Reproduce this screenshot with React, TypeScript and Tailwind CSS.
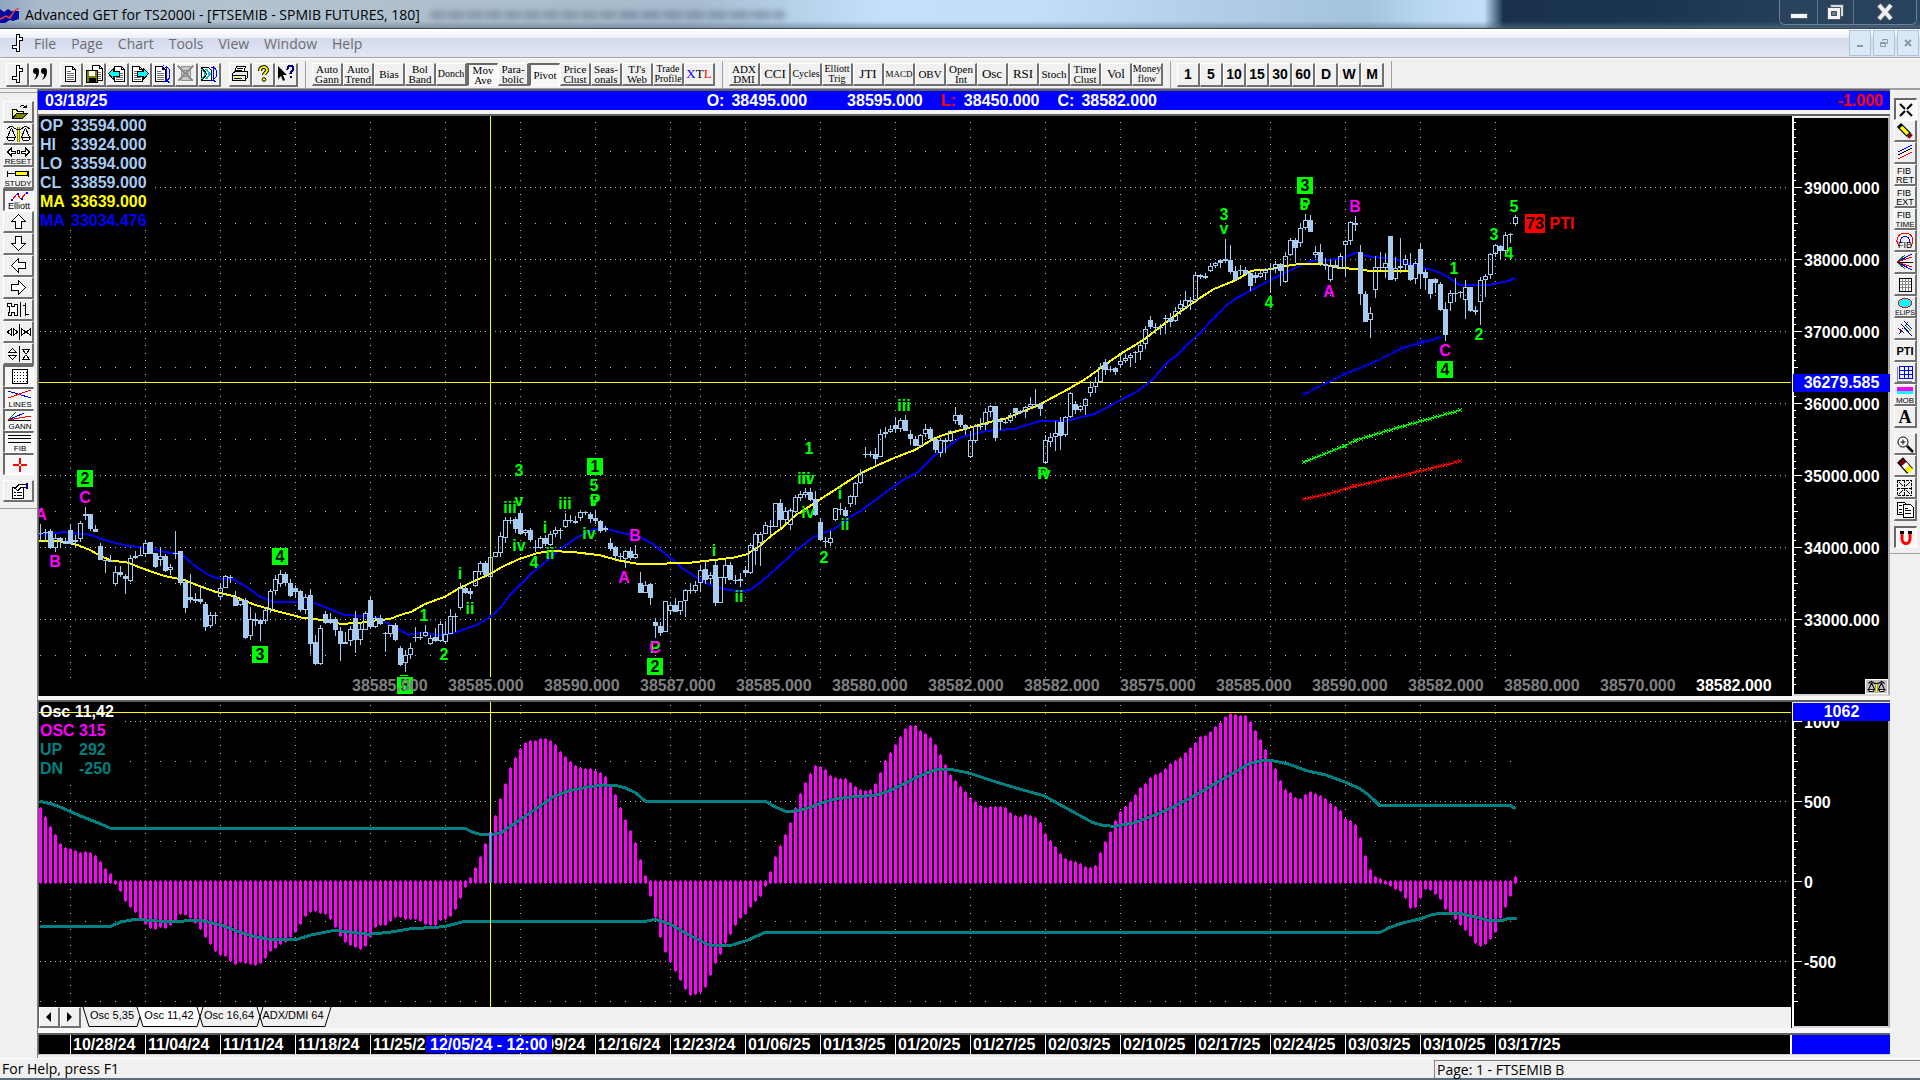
import React from "react";

type Pt = [number, number];

const BAR_STEP = 5;
const BAR_LEFT = 40;
const CANDLE = "#a6caf0";
const GREEN = "#00ff00";
const MAGENTA = "#ff00ff";
const TEAL = "#008080";

/* Expands flat x,y pairs measured in sub-pixel units into pane points. */
function trace(x0: number, div: number, y0: number, flat: number[]): Pt[] {
  const out: Pt[] = [];
  for (let i = 0; i < flat.length; i += 2) out.push([x0 + flat[i] / div, y0 + flat[i + 1] / 3]);
  return out;
}
const toPoints = (pts: Pt[]) => pts.map(([x, y]) => `${x.toFixed(1)},${y.toFixed(1)}`).join(" ");

const fastMa: Pt[] = [
  ...trace(0, 3, 440, [117, 302, 180, 304, 230, 314, 270, 330, 300, 347, 335, 362, 380, 367, 430, 386, 490, 407, 550, 419, 600, 439, 650, 457, 700, 468, 760, 493, 810, 508, 860, 521, 910, 534, 970, 540, 1020, 551, 1070, 550, 1120, 542, 1170, 537]),
  ...trace(400, 3, 440, [0, 525, 35, 515, 75, 492, 135, 470, 180, 443, 230, 420, 270, 402, 310, 379, 360, 356, 410, 340, 450, 333, 520, 336, 600, 346, 660, 362, 710, 371, 770, 373, 820, 369, 870, 368, 940, 360, 1000, 353, 1040, 343, 1080, 318, 1110, 290, 1150, 261, 1190, 222]),
  ...trace(800, 2.613, 200, [0, 938, 50, 900, 100, 863, 155, 822, 200, 797, 250, 772, 300, 750, 350, 716, 380, 703, 440, 684, 500, 665, 540, 655, 580, 635, 620, 617, 700, 568, 745, 538, 800, 492, 840, 460, 900, 418, 950, 373, 1000, 330, 1040, 298, 1080, 268, 1140, 240, 1180, 212, 1230, 208, 1270, 198, 1310, 191, 1360, 192, 1410, 204, 1460, 207, 1490, 213, 1590, 213]),
];

const slowMa: Pt[] = [
  ...trace(0, 3, 440, [117, 284, 190, 277, 225, 280, 270, 284, 310, 299, 380, 317, 430, 322, 500, 337, 545, 342, 580, 374, 620, 402, 650, 415, 700, 418, 740, 441, 780, 470, 820, 485, 940, 488, 980, 503, 1030, 524, 1080, 528, 1125, 530, 1160, 548]),
  ...trace(400, 3, 440, [0, 570, 25, 584, 70, 578, 110, 585, 160, 580, 200, 565, 230, 555, 270, 532, 300, 505, 330, 465, 360, 436, 400, 396, 440, 363, 480, 328, 530, 293, 580, 268, 610, 263, 650, 275, 720, 291, 760, 313, 800, 345, 850, 386, 890, 413, 930, 435, 975, 448, 1020, 454, 1050, 450, 1080, 428, 1130, 385, 1180, 338, 1240, 292, 1270, 280, 1300, 268, 1340, 240]),
  ...trace(800, 2.613, 200, [125, 955, 160, 932, 220, 880, 270, 840, 310, 815, 350, 768, 380, 745, 420, 712, 490, 692, 560, 687, 630, 662, 690, 663, 720, 656, 770, 642, 830, 605, 880, 575, 920, 540, 960, 487, 980, 470, 1050, 393, 1110, 320, 1140, 295, 1180, 270, 1230, 240]),
  ...trace(1280, 2.45, 0, [0, 826, 40, 802, 80, 782, 150, 777, 185, 758, 215, 769, 285, 778, 330, 798, 380, 812, 410, 830, 440, 854, 515, 854, 560, 843, 577, 833]),
];

const upperBand: Pt[] = [
  ...trace(36, 2.01, 700, [7, 304, 30, 311, 50, 322, 80, 342, 130, 372, 150, 385, 862, 385, 875, 395, 895, 404, 913, 405, 935, 398, 960, 372, 1000, 332, 1040, 290, 1070, 273, 1110, 261, 1140, 255, 1165, 256, 1185, 264, 1205, 278, 1225, 304, 1466, 304, 1485, 320, 1505, 333]),
  ...trace(790, 2.613, 700, [0, 334, 20, 332, 50, 323, 80, 310, 110, 299, 150, 292, 200, 288, 230, 284, 270, 268, 320, 238, 350, 222, 380, 210, 420, 208, 470, 220, 530, 243, 600, 267, 665, 288, 720, 323, 790, 367, 820, 377, 850, 379, 900, 368, 960, 342, 1000, 322, 1060, 285, 1130, 238, 1200, 191, 1230, 183, 1255, 181, 1300, 191, 1350, 212, 1400, 225, 1450, 246, 1490, 266, 1515, 288, 1540, 316]),
  ...trace(1280, 2.45, 640, [565, 496, 577, 507]),
];

const lowerBand: Pt[] = [
  ...trace(36, 2.01, 700, [7, 679, 150, 679, 170, 666, 200, 658, 265, 665, 330, 661, 370, 674, 410, 697, 440, 710, 470, 718, 525, 718, 550, 706, 600, 691, 670, 703, 710, 697, 750, 687, 820, 680, 862, 664, 1225, 664, 1245, 658, 1275, 673, 1310, 703, 1350, 733, 1365, 738, 1395, 737, 1430, 721, 1466, 697]),
  ...trace(1280, 2.45, 640, [246, 877, 270, 862, 300, 849, 340, 838, 370, 825, 390, 820, 440, 820, 480, 832, 515, 842, 545, 841, 560, 835, 580, 835]),
];

const channels: { color: string; pts: Pt[] }[] = [
  { color: "#0000ff", pts: [[1304, 394], [1345, 374], [1374, 362], [1402, 348], [1423, 342], [1443, 337]] },
  { color: "#00ff00", pts: [[1304, 462], [1345, 446], [1356, 440], [1400, 427], [1461, 410]] },
  { color: "#ff0000", pts: [[1304, 499], [1324, 495], [1355, 486], [1400, 476], [1461, 461]] },
];

function crosses(pts: Pt[]): string {
  let d = "";
  for (let i = 0; i < pts.length - 1; i++) {
    const [x1, y1] = pts[i];
    const [x2, y2] = pts[i + 1];
    for (let x = x1; x < x2; x += 5) {
      const y = Math.round(y1 + ((y2 - y1) * (x - x1)) / (x2 - x1));
      d += `M${x - 2} ${y - 2}l4 4M${x - 2} ${y + 2}l4 -4`;
    }
  }
  return d;
}

/* Each candle: high, body top, body bottom, low, kind (0 rising, 1 falling, 2 flat). */
const candleRuns: { y0: number; rows: string }[] = [
  {
    y0: 440,
    rows:
      "252 280 281 305 2|268 277 278 305 2|267 272 323 326 1|283 295 323 335 0|291 294 304 323 1|294 304 311 313 1|252 269 311 313 1|286 299 306 322 0|243 249 296 305 0|201 223 229 240 0|222 222 266 274 1|255 267 277 277 1|309 317 359 359 1|359 359 360 399 2|345 359 365 365 1|378 397 431 437 0|378 396 406 410 1|402 408 417 461 1|345 354 422 426 0|333 347 355 358 0|320 344 345 346 2|303 310 343 352 0|306 306 342 342 1|339 339 380 384 1|322 349 361 378 0|342 348 392 395 1|372 381 391 404 0|273 338 339 357 2|333 333 428 435 1|420 426 504 518 1|402 471 481 490 1|459 477 483 488 1|435 476 487 492 1|486 491 560 573 1|515 526 559 565 0|515 526 527 552 2|430 444 472 479 0|405 408 445 445 0|405 412 413 430 2|453 472 497 497 1|474 481 496 497 0|474 479 593 597 1|500 538 587 600 0|520 536 543 558 1|536 541 552 603 1|500 511 542 553 0|448 454 509 519 0|405 418 452 465 0|391 402 433 440 0|397 402 430 437 1|417 429 467 470 1|436 444 455 475 1|450 453 510 516 1|462 471 510 521 0|447 465 611 641 1|585 606 671 674 1|556 564 671 674 0|513 522 548 551 1|520 538 548 551 1|532 538 570 587 1|561 573 612 663 1|576 605 611 613 0|558 568 604 617 0|513 534 599 639 1|545 567 599 614 0|513 519 569 570 0|468 480 560 567 1|528 535 560 565 0|524 534 553 555 1|576 580 581 636 2|555 555 583 590 0|549 555 600 602 1|618 624 674 678 1|630 646 670 696 0|610 625 646 658 0|561 590 591 605 2|575 590 591 600 2|555 577 587 590 0|586 595 611 614 0|564 592 602 607 1|543 552 602 605 0|543 581 607 613 0|507 528 581 583 0|519 527 528 575 2|430 445 503 509 0|436 445 458 462 1|445 454 462 477 1|392 394 437 440 0|362 370 396 405 0|363 369 405 408 1|352 352 410 410 0|337 337 352 352 0|276 289 338 350 0|231 240 294 308 0|231 240 241 252 2|230 238 267 280 1|210 218 281 285 1|268 271 280 288 0|264 270 299 306 1|300 321 322 336 2|288 294 323 327 0|284 293 312 318 1|272 283 314 318 0|262 269 283 292 0|265 270 271 297 2|219 241 260 265 0|224 241 242 249 2|228 242 250 252 1|210 217 233 242 0|213 217 218 225 2|215 221 236 249 1|210 235 244 252 1|240 243 273 279 1|257 264 271 277 0|294 310 327 333 1|318 321 348 360 1|340 347 348 360 2|330 334 356 384 0|320 332 354 359 1|315 341 353 357 0|396 430 458 459 1|422 434 458 460 0|429 432 473 494 1|534 546 557 594 1|545 558 578 588 1|484 484 576 576 0|486 496 512 525 0|474 495 515 517 1|484 484 514 524 0|448 451 484 530 0|430 451 452 461 2|423 434 452 459 0|375 390 428 455 0|361 388 419 432 1|397 405 418 433 0|364 375 489 497 1|412 412 488 490 0|360 376 414 432 0|367 375 419 420 1|405 419 420 432 2|400 416 421 440 0|377 390 399 411 1|308 316 400 403 0|275 283 334 376 0|275 281 308 378 0|245 256 281 283 0|240 258 259 285 2|190 190 261 261 0|177 190 240 265 1|200 214 240 250 0|205 210 255 270 0|166 171 215 220 0|153 161 174 183 0|145 156 164 175 0|145 156 180 184 1|153 178 225 228 1|235 246 299 302 1|290 303 304 322 2|272 295 308 318 0|203 205 240 243 0|190 207 208 225 2|200 210 228 232 1|165 168 193 201 0|125 129 170 195 0|88 100 129 133 0",
  },
  {
    y0: 200,
    rows:
      "741 762 763 775 2|753 763 764 772 2|745 763 777 795 1|687 702 770 772 0|681 697 703 715 0|675 687 695 700 0|651 675 686 695 1|655 661 688 697 0|645 660 692 694 1|690 702 718 735 1|708 717 737 738 1|702 706 737 740 0|672 686 702 712 0|680 686 718 722 1|716 716 749 759 1|715 721 758 771 0|715 720 725 760 0|690 693 722 726 0|621 646 664 672 0|642 645 674 682 1|672 675 686 705 1|693 720 770 774 0|673 679 724 730 0|655 678 679 690 2|625 637 676 690 0|615 618 637 650 0|618 618 714 723 1|654 660 665 690 0|655 665 666 672 2|638 646 664 669 0|624 624 640 655 1|630 634 640 643 1|618 622 635 654 0|591 613 620 627 0|567 613 614 625 2|609 612 627 648 1|705 721 790 792 0|700 712 725 740 0|663 699 710 753 0|651 666 707 750 1|648 650 706 710 0|575 580 652 654 0|603 612 631 641 1|615 619 631 635 0|595 598 619 645 0|543 562 580 592 0|530 545 562 580 0|490 502 545 545 0|478 487 510 525 1|498 508 509 515 2|500 504 515 524 1|462 484 494 503 0|462 475 484 490 0|458 466 475 500 0|454 457 458 488 2|428 436 457 480 0|378 388 433 446 0|348 360 381 388 1|370 381 382 402 2|373 382 383 405 2|345 353 354 402 2|340 354 367 380 1|321 334 364 367 0|300 313 328 345 0|273 301 320 325 0|292 301 307 330 1|216 226 300 302 0|222 226 232 238 1|220 229 234 237 0|190 198 214 216 0|185 189 199 205 0|178 181 188 204 1|117 177 184 188 0|135 180 215 222 1|198 213 240 240 1|195 210 211 225 2|200 210 221 225 1|216 220 258 274 1|215 225 233 250 1|210 220 231 235 0|205 209 220 240 0|190 207 208 278 2|184 193 207 218 0|190 192 212 258 1|156 168 245 248 0|115 121 166 168 0|115 121 143 190 1|69 85 130 140 0|42 61 85 90 0|45 60 95 96 1|138 157 164 175 0|132 156 190 197 1|175 192 198 210 1|178 198 241 245 0|180 196 202 205 1|160 169 203 206 0|120 124 136 230 0|62 67 124 136 0|48 70 76 93 1|135 156 282 315 1|273 282 366 366 1|321 340 361 414 0|168 202 271 294 0|156 202 203 210 2|160 190 205 235 0",
  },
  {
    y0: 0,
    rows:
      "708 708 840 840 1|772 805 838 842 0|714 799 805 820 0|765 778 795 810 0|760 794 840 842 1|783 790 838 852 0|729 746 822 867 1|808 817 835 870 1|837 837 882 897 1|835 838 850 880 1|846 852 930 933 1|906 927 1005 1022 1|870 880 910 933 0|834 880 881 905 2|873 877 878 895 2|840 861 900 957 0|861 861 933 935 1|918 930 936 945 1|831 841 907 975 0|823 827 841 890 0|760 763 824 838 0|732 736 763 770 0|735 738 752 780 1|696 706 752 765 0|699 703 704 730 2|645 651 672 678 0",
  },
];

const candles = candleRuns.flatMap((run) =>
  run.rows.split("|").map((row) => {
    const [hi, top, bot, lo, kind] = row.split(" ").map(Number);
    const px = (v: number) => Math.round(run.y0 + v / 3);
    return { hi: px(hi), top: px(top), bot: px(bot), lo: px(lo), kind };
  }),
);

function candlePaths() {
  let solid = "";
  let wire = "";
  candles.forEach((c, i) => {
    const x = BAR_LEFT + i * BAR_STEP;
    if (c.kind === 2) {
      wire += `M${x - 2} ${c.top + 0.5}h5M${x + 0.5} ${c.hi}V${c.lo}`;
      return;
    }
    wire += `M${x + 0.5} ${c.hi}V${c.top}M${x + 0.5} ${c.bot}V${c.lo}`;
    if (c.kind === 1) solid += `M${x - 2} ${c.top}h5V${c.bot}h-5z`;
    else wire += `M${x - 1.5} ${c.top + 0.5}h4V${Math.max(c.bot - 0.5, c.top + 1.5)}h-4z`;
  });
  return { solid, wire };
}

const oscTops = [
  325, 352, 382, 406, 433, 445, 448, 454, 460, 457, 460, 469, 487, 508, 523, 552, 574, 604, 622, 637, 658, 673, 685, 688, 682, 685, 676, 661, 643, 646, 655, 670, 688, 712, 733, 754, 766, 769, 784, 793, 787, 790, 793, 796, 790, 775, 754, 745, 733, 727, 712, 697, 673, 649, 637, 634, 640, 643, 658, 682, 709, 727, 736, 742, 748, 739, 712, 682, 676, 676, 664, 652, 652, 658, 658, 658, 664, 673, 676, 676, 661, 658, 649, 628, 595, 562, 535, 505, 472, 433, 395, 349, 298, 253, 205, 175, 148, 130, 124, 124, 118, 118, 124, 136, 157, 172, 187, 199, 205, 208, 208, 214, 220, 232, 254, 286, 325, 361, 394, 430, 481, 529, 589, 652, 712, 757, 787, 814, 841, 868, 886, 883, 877, 862, 826, 790, 763, 730, 703, 676, 655, 643, 622, 604, 589, 559, 517, 472, 439, 406, 370, 325, 283, 250, 223, 199, 202, 211, 229, 235, 238, 238, 250, 262, 271, 274, 271, 253, 220, 184, 160, 136, 112, 88, 79, 79, 94, 103, 115, 136, 166, 196, 226, 244, 262, 277, 295, 307, 319, 325, 322, 322, 322, 325, 340, 349, 352, 346, 349, 355, 370, 403, 424, 442, 463, 478, 484, 487, 493, 502, 505, 499, 460, 427, 397, 364, 337, 322, 307, 286, 265, 253, 235, 226, 220, 208, 193, 184, 175, 160, 145, 130, 112, 109, 97, 82, 70, 52, 43, 46, 49, 49, 67, 94, 121, 151, 184, 208, 244, 271, 280, 295, 298, 286, 277, 283, 289, 298, 313, 322, 334, 358, 364, 376, 415, 469, 511, 532, 538, 552, 558, 567, 573, 593, 623, 620, 593, 567, 570, 582, 596, 626, 640, 656, 674, 689, 707, 728, 737, 731, 716, 695, 653, 620, 588, 532,
];

const weekLines = [...Array.from({ length: 20 }, (_, i) => 70 + 75 * i), 700];

function dotGrid(rows: { y: number; step: number; end: number }[], colYs: number[]) {
  let d = "";
  for (const r of rows) for (let x = 40; x < r.end; x += r.step) d += `M${x} ${r.y + 0.5}h1`;
  for (const x of weekLines) for (const y of colYs) d += `M${x} ${y + 0.5}h1`;
  return d;
}

const priceRows = Array.from({ length: 15 }, (_, i) => {
  const major = i % 2 === 1;
  return { y: 151 + 36 * i, step: major ? 5 : 15, end: major ? 1790 : 1516 };
});
const priceColYs = Array.from({ length: 78 }, (_, i) => Math.floor(122.7 + 7.2 * i));
const oscRows = [721, 761, 801, 841, 881, 921, 961, 1001].map((y, i) => ({
  y,
  step: i % 2 === 0 ? 5 : 15,
  end: i % 2 === 0 ? 1790 : 1516,
}));
const oscColYs = Array.from({ length: 37 }, (_, i) => 705 + 8 * i);

type Mark = { x: number; y: number; t: string; c?: string };
const waveMarks: Mark[] = [
  { x: 41, y: 520, t: "A", c: MAGENTA },
  { x: 55, y: 567, t: "B", c: MAGENTA },
  { x: 85, y: 503, t: "C", c: MAGENTA },
  { x: 424, y: 621, t: "1" },
  { x: 460, y: 579, t: "i" },
  { x: 470, y: 614, t: "ii" },
  { x: 444, y: 660, t: "2" },
  { x: 519, y: 476, t: "3" },
  { x: 519, y: 506, t: "v" },
  { x: 510, y: 513, t: "iii" },
  { x: 519, y: 551, t: "iv" },
  { x: 534, y: 568, t: "4" },
  { x: 545, y: 533, t: "i" },
  { x: 550, y: 559, t: "ii" },
  { x: 565, y: 509, t: "iii" },
  { x: 594, y: 491, t: "5" },
  { x: 595, y: 506, t: "P" },
  { x: 594, y: 506, t: "v" },
  { x: 589, y: 539, t: "iv" },
  { x: 635, y: 541, t: "B", c: MAGENTA },
  { x: 624, y: 583, t: "A", c: MAGENTA },
  { x: 655, y: 653, t: "P" },
  { x: 655, y: 653, t: "C", c: MAGENTA },
  { x: 714, y: 556, t: "i" },
  { x: 739, y: 602, t: "ii" },
  { x: 809, y: 454, t: "1" },
  { x: 804, y: 484, t: "iii" },
  { x: 808, y: 484, t: "iv" },
  { x: 808, y: 518, t: "iv" },
  { x: 840, y: 499, t: "i" },
  { x: 845, y: 530, t: "ii" },
  { x: 824, y: 563, t: "2" },
  { x: 904, y: 411, t: "iii" },
  { x: 1043, y: 479, t: "P" },
  { x: 1044, y: 479, t: "iv" },
  { x: 1224, y: 220, t: "3" },
  { x: 1224, y: 234, t: "v" },
  { x: 1269, y: 308, t: "4" },
  { x: 1329, y: 297, t: "A", c: MAGENTA },
  { x: 1355, y: 212, t: "B", c: MAGENTA },
  { x: 1305, y: 210, t: "P" },
  { x: 1304, y: 210, t: "5" },
  { x: 1514, y: 212, t: "5" },
  { x: 1494, y: 240, t: "3" },
  { x: 1509, y: 259, t: "4" },
  { x: 1454, y: 274, t: "1" },
  { x: 1479, y: 340, t: "2" },
  { x: 1445, y: 356, t: "C", c: MAGENTA },
];
const boxedMarks: Mark[] = [
  { x: 85, y: 470, t: "2" },
  { x: 280, y: 548, t: "4" },
  { x: 260, y: 646, t: "3" },
  { x: 595, y: 458, t: "1" },
  { x: 655, y: 658, t: "2" },
  { x: 1305, y: 177, t: "3" },
  { x: 1445, y: 361, t: "4" },
  { x: 405, y: 677, t: "5" },
];

function PricePane() {
  const { solid, wire } = candlePaths();
  return (
    <svg className="absolute inset-0 h-full w-full" aria-label="Price chart" role="img">
      <g transform="translate(-39 -116)">
        <g shapeRendering="crispEdges" fill="none">
          <path d={dotGrid(priceRows, priceColYs)} stroke="#c0c0c0" />
          <rect x="39" y="116" width="114" height="112" fill="#000" />
          <line x1="490.5" y1="116" x2="490.5" y2="677" stroke="#ff0" />
          <line x1="39" y1="382.5" x2="1791" y2="382.5" stroke="#ff0" />
          <polyline points={toPoints(slowMa)} stroke="#0000ff" strokeWidth="2" />
          <polyline points={toPoints(fastMa)} stroke="#ffff00" strokeWidth="2" />
          {channels.map((c) => (
            <g key={c.color} stroke={c.color}>
              <polyline points={toPoints(c.pts)} />
              <path d={crosses(c.pts)} />
            </g>
          ))}
          <path d={solid} fill={CANDLE} />
          <path d={wire} stroke={CANDLE} />
          <path d="M400 675.5h8" stroke={GREEN} />
        </g>
        <g fontFamily="Liberation Sans, Arial, sans-serif" fontWeight="700" fontSize="16" textAnchor="middle">
          {waveMarks.map((m, i) => (
            <text key={i} x={m.x} y={m.y} fill={m.c ?? GREEN}>
              {m.t}
            </text>
          ))}
          {boxedMarks.map((m, i) => (
            <g key={i}>
              <rect x={m.x - 8} y={m.y} width="16" height="17" fill={GREEN} />
              <text x={m.x} y={m.y + 14} fill="#000">
                {m.t}
              </text>
            </g>
          ))}
          <rect x="1525" y="214" width="20" height="19" fill="#f00" />
          <text x="1535" y="229" fill="#000">73</text>
          <text x="1562" y="229" fill="#f00">PTI</text>
        </g>
      </g>
    </svg>
  );
}

function OscPane() {
  let wide = "";
  let tip = "";
  oscTops.forEach((v, i) => {
    const x = BAR_LEFT + i * BAR_STEP;
    if (i === 90) return;
    const y = Math.round(700 + v / 3);
    if (v < 547) {
      wide += `M${x - 1} ${y}h3V883h-3z`;
      tip += `M${x} ${y - 1}h1V884h-1z`;
    } else {
      wide += `M${x - 1} 881h3V${y}h-3z`;
      tip += `M${x} 880h1V${y + 1}h-1z`;
    }
  });
  return (
    <svg className="absolute inset-0 h-full w-full" aria-label="Oscillator chart" role="img">
      <g transform="translate(-39 -702)" shapeRendering="crispEdges" fill="none">
        <path d={dotGrid(oscRows, oscColYs)} stroke="#c0c0c0" />
        <rect x="39" y="702" width="84" height="79" fill="#000" />
        <path d={wide + tip} fill={MAGENTA} />
        <polyline points={toPoints(upperBand)} stroke={TEAL} strokeWidth="3" />
        <polyline points={toPoints(lowerBand)} stroke={TEAL} strokeWidth="3" />
        <line x1="490.5" y1="702" x2="490.5" y2="1007" stroke="#ff0" />
        <path d="M489 832h3v51h-3z" fill="#c040c0" />
        <path d="M490 832h1v51h-1z" fill="#00e0ff" />
        <line x1="39" y1="712.5" x2="1791" y2="712.5" stroke="#ff0" />
      </g>
    </svg>
  );
}

function Axis({ top, ticks, labels, tag, tagY }: { top: number; ticks: [number, number][]; labels: [string, number][]; tag: string; tagY: number }) {
  return (
    <div className="relative w-[98px] shrink-0 self-stretch border-y-2 border-r-2 border-l-2 border-t-[#f0f0f0] border-r-[#a8a8a8] border-b-[#d8d8d8] border-l-white bg-black">
      <svg className="absolute inset-0 h-full w-full" aria-hidden="true">
        <g transform={`translate(-1794 ${-top - 2})`} shapeRendering="crispEdges">
          <path d={ticks.map(([y, w]) => `M1794 ${y + 0.5}h${w}`).join("")} stroke="#fff" />
        </g>
        <g transform={`translate(-1794 ${-top - 2})`} fontFamily="Liberation Sans, Arial, sans-serif" fontWeight="700" fontSize="16" fill="#fff">
          {labels.map(([t, y]) => (
            <text key={t} x="1804" y={y + 6}>
              {t}
            </text>
          ))}
        </g>
      </svg>
      <div
        className="absolute -right-0.5 -left-px flex h-[18px] items-center justify-center bg-[#0000ff] text-[16px] leading-[18px] font-bold text-white"
        style={{ top: tagY - top - 2 }}
      >
        {tag}
      </div>
    </div>
  );
}

const priceTicks: [number, number][] = Array.from({ length: 79 }, (_, i) => [
  Math.floor(122.7 + 7.2 * i),
  i % 10 === 9 ? 8 : i % 10 === 4 ? 4 : 2,
]);
const priceLabels: [string, number][] = [39, 38, 37, 36, 35, 34, 33].map((n, i) => [`${n}000.000`, 188 + 72 * i]);
const oscTicks: [number, number][] = Array.from({ length: 36 }, (_, i) => [721 + 8 * i, i % 10 === 0 ? 8 : i % 5 === 0 ? 4 : 2]);
const oscLabels: [string, number][] = [["1000", 722], ["500", 802], ["0", 882], ["-500", 962]];

/* ---------- buttons ---------- */

function Btn({ label, pressed, className, children }: { label: string; pressed?: boolean; className: string; children: React.ReactNode }) {
  return (
    <button
      type="button"
      aria-label={label}
      aria-pressed={pressed || undefined}
      className={
        (pressed
          ? "border-t-2 border-l-2 border-r border-b border-t-[#696969] border-l-[#696969] border-r-white border-b-white bg-[#f8f8f8] "
          : "border-t border-l border-r-2 border-b-2 border-t-white border-l-white border-r-[#707070] border-b-[#707070] bg-[#f0f0f0] ") +
        "flex shrink-0 items-center justify-center overflow-hidden text-black " +
        className
      }
    >
      {children}
    </button>
  );
}

function Ico({ w = 20, h = 20, children }: { w?: number; h?: number; children: React.ReactNode }) {
  return (
    <svg width={w} height={h} viewBox={`0 0 ${w} ${h}`} fill="none" stroke="#000" shapeRendering="crispEdges" className="shrink-0" aria-hidden="true">
      {children}
    </svg>
  );
}

const Sheet = ({ x = 4, y = 2 }: { x?: number; y?: number }) => (
  <g transform={`translate(${x} ${y})`}>
    <path d="M.5 .5h7l3 3v12h-10z" fill="#fff" />
    <path d="M7.5 .5v3h3" />
    <path d="M2 5.5h4M2 7.5h7M2 9.5h7M2 11.5h7M2 13.5h7" stroke="#707070" />
  </g>
);

const topIcons: Record<string, React.ReactNode> = {
  bar: (
    <Ico>
      <path d="M9.5 1.5h3v3h3v3h-3v11h-3v-3h-4v-3h4z" fill="#fff" />
    </Ico>
  ),
  quote: (
    <Ico>
      <g fill="#000" stroke="none" shapeRendering="auto">
        <path d="M3 7a3 3 0 1 1 6 0c0 4-1 7-5 9 2-3 2-4 2-6-2 0-3-1-3-3zM11 7a3 3 0 1 1 6 0c0 4-1 7-5 9 2-3 2-4 2-6-2 0-3-1-3-3z" />
      </g>
    </Ico>
  ),
  page: <Ico><Sheet /></Ico>,
  save: (
    <Ico>
      <Sheet x={8} y={1} />
      <path d="M2.500 6.500h11v12h-11z" fill="#808000" />
      <path d="M5 7h6v5h-6z" fill="#fff" stroke="none" />
      <path d="M5 14h6v4h-6z" fill="#000" />
    </Ico>
  ),
  left: (
    <Ico>
      <Sheet x={7} y={2} />
      <path d="M1.500 9.500l5-5v3h6v5h-6v3z" fill="#0ff" />
    </Ico>
  ),
  right: (
    <Ico>
      <Sheet x={2} y={2} />
      <path d="M18.500 9.500l-5-5v3h-6v5h6v3z" fill="#0ff" />
    </Ico>
  ),
  rotate: (
    <Ico>
      <Sheet x={2} y={2} />
      <path d="M13.500 2v15M11.500 3h3l2 3v8l-3 3h-3M16.500 14l-2 3 2 2M11 1l-2 2 2 2" stroke="#00f" />
    </Ico>
  ),
  remove: (
    <Ico>
      <g stroke="#909090">
        <path d="M5.500 2.500h9v14h-9zM7 6.500h6M7 9.500h6M7 12.500h6" fill="#ccc" />
        <path d="M2 2l15 15M17 2L2 17" strokeWidth="2" />
      </g>
    </Ico>
  ),
  cycle: (
    <Ico>
      <path d="M2.500 3.500h7l3 3v10h-10z" fill="#fff" />
      <path d="M3 5l4 5-4 5M7 5l4 5-4 5" stroke="#00c8c8" strokeWidth="2" />
      <path d="M3 4l5 6-5 6" />
      <path d="M14.500 2v13M12 3h3l2 3v7l-3 3h-3M17 13l-3 3 3 2" stroke="#00f" />
    </Ico>
  ),
  print: (
    <Ico>
      <path d="M6.500 2.500h9l-2 6h-9z" fill="#fff" />
      <path d="M7 4.500h6M6 6.500h6M2.500 9.500l3-2h12v6l-3 3h-12z" fill="#e8e8e8" />
      <path d="M3 11.500h12v5M4 14.500h8" />
      <path d="M6 13h5" stroke="#ff0" />
    </Ico>
  ),
  help: (
    <Ico>
      <g shapeRendering="auto">
        <path d="M7 7c0-5 7-5 7-1 0 3-3 3-3 5" stroke="#000" strokeWidth="4" />
        <path d="M7 7c0-5 7-5 7-1 0 3-3 3-3 5" stroke="#ff0" strokeWidth="2" />
        <circle cx="11" cy="15.500" r="1.800" fill="#ff0" />
      </g>
    </Ico>
  ),
  what: (
    <Ico>
      <path d="M2 2v13l3-3 2 5 2-1-2-5h4z" fill="#000" stroke="none" shapeRendering="auto" />
      <path d="M11.500 5.500c0-5 6-4 6-1 0 3-3 3-3 5" stroke="#000080" strokeWidth="2" />
      <path d="M13.500 11.500h2v2h-2z" fill="#000080" stroke="none" />
    </Ico>
  ),
};

const iconGroups: [string, string][][] = [
  [["bar", "Bar chart"], ["quote", "Quotes"]],
  [["page", "New page"], ["save", "Save page"], ["left", "Previous page"], ["right", "Next page"], ["rotate", "Rotate page"], ["remove", "Delete page"], ["cycle", "Cycle pages"]],
  [["print", "Print"], ["help", "Help"], ["what", "Context help"]],
];

type Study = { a: string; b?: string; s?: "xs" | "sm" | "md" | "lg"; p?: boolean };
const studiesOne: Study[] = [
  { a: "Auto", b: "Gann" }, { a: "Auto", b: "Trend" }, { a: "Bias", s: "md" }, { a: "Bol", b: "Band" }, { a: "Donch", s: "sm" },
  { a: "Mov", b: "Ave", p: true }, { a: "Para-", b: "bolic" }, { a: "Pivot", s: "md", p: true }, { a: "Price", b: "Clust" }, { a: "Seas-", b: "onals" },
  { a: "TJ's", b: "Web" }, { a: "Trade", b: "Profile", s: "sm" }, { a: "XTL", s: "lg" },
];
const studiesTwo: Study[] = [
  { a: "ADX", b: "DMI" }, { a: "CCI", s: "lg" }, { a: "Cycles", s: "sm" }, { a: "Elliott", b: "Trig", s: "sm" }, { a: "JTI", s: "lg" }, { a: "MACD", s: "xs" },
  { a: "OBV", s: "md" }, { a: "Open", b: "Int" }, { a: "Osc", s: "lg" }, { a: "RSI", s: "lg" }, { a: "Stoch", s: "md" }, { a: "Time", b: "Clust" },
  { a: "Vol", s: "lg" }, { a: "Money", b: "flow", s: "sm" },
];
const studySize = { xs: "text-[9px]", sm: "text-[10px]", md: "text-[11px]", lg: "text-[13px]" };

function StudyButton({ a, b, s = "md", p }: Study) {
  return (
    <Btn label={b ? `${a} ${b}` : a} pressed={p} className="h-[23px] w-[31px]">
      <span className={"block text-center font-['Liberation_Serif',serif] leading-[10px] font-medium whitespace-nowrap " + studySize[s]}>
        {a === "XTL" ? (
          <>
            <span className="text-[#0000ff]">X</span>T<span className="text-[#ff0000]">L</span>
          </>
        ) : (
          a
        )}
        {b && (
          <>
            <br />
            {b}
          </>
        )}
      </span>
    </Btn>
  );
}

const Sep = () => <span className="mr-[6px] ml-[7px] h-[28px] w-px shrink-0 self-center bg-[#a0a0a0]" />;

/* ---------- side bar icons ---------- */

const T = ({ x, y, s = 8, w = 400, children }: { x: number; y: number; s?: number; w?: number; children: string }) => (
  <text x={x} y={y} fontSize={s} textAnchor="middle" fill="#000" stroke="none" fontFamily="Liberation Sans, Arial, sans-serif" fontWeight={w}>
    {children}
  </text>
);

const ScalesArt = () => (
  <>
    <path d="M13.500 3v15" stroke="#808000" strokeWidth="3" />
    <path d="M13.500 3v15" stroke="#ff0" />
    <path d="M2 5l4-3 5 3h5l5-3 4 3M6.500 4l-4 9M6.500 4l4 9M20.500 4l-4 9M20.500 4l4 9" />
    <path d="M1.500 13.500h9l-2 3h-5zM16.500 13.500h9l-2 3h-5z" fill="#fff" />
  </>
);

const leftIcons: { label: string; p?: boolean; art: React.ReactNode }[] = [
  {
    label: "Open",
    art: (
      <>
        <path d="M7.500 16.500v-9h4l1 2h6v3" fill="#ff8" />
        <path d="M7.500 16.500l4-5h11l-5 5z" fill="#808000" />
        <path d="M15 4.500c2-2 4-1 6 1m0-3v3h-3" />
      </>
    ),
  },
  { label: "Scales", art: <ScalesArt /> },
  {
    label: "Reset",
    art: (
      <>
        <path d="M2.500 6l4-4v3h4v2h-4v3zM24.500 6l-4-4v3h-4v2h4v3z" fill="#fff" />
        <circle cx="13.500" cy="6" r="1.500" fill="#fff" />
        <T x={13} y={18}>RESET</T>
      </>
    ),
  },
  {
    label: "Study",
    art: (
      <>
        <path d="M2.500 3v6M3 5.500h7" />
        <path d="M10.500 3.500h12v4h-12z" fill="#ff0" />
        <path d="M23.500 3v6" />
        <T x={13} y={18}>STUDY</T>
      </>
    ),
  },
  {
    label: "Elliott",
    p: true,
    art: (
      <>
        <path d="M6 9l5-6 4 5 6-7" stroke="#f00" />
        <path d="M5 8h2v2h-2zM11 2h2v2h-2zM15 7h2v2h-2zM20 1h2v2h-2z" fill="#00f" stroke="none" />
        <T x={13} y={18} s={9}>Elliott</T>
      </>
    ),
  },
  { label: "Up", art: <path d="M13.500 2.500l7 7h-4v7h-6v-7h-4z" fill="#fff" /> },
  { label: "Down", art: <path d="M13.500 16.500l7-7h-4v-7h-6v7h-4z" fill="#fff" /> },
  { label: "Left", art: <path d="M6.500 9.500l7-7v4h7v6h-7v4z" fill="#fff" /> },
  { label: "Right", art: <path d="M20.500 9.500l-7-7v4h-7v6h7v4z" fill="#fff" /> },
  {
    label: "Bar spacing",
    art: (
      <>
        <path d="M2.500 3.500h4v3h3v-2h3v11h-3v-3h-3v3h-3v-3h1v-6h-2z" fill="#fff" />
        <path d="M15.500 2v15M20.500 3v13M18 5.500h3M20 14.500h4" />
      </>
    ),
  },
  {
    label: "Horizontal scale",
    art: (
      <>
        <path d="M6.500 6.500v7l-4-3.500zM8.500 6.500v7l4-3.500zM16.500 6.500v7l4-3.500zM25.500 6.500v7l-4-3.500z" fill="#fff" />
        <path d="M14.500 2v16" />
      </>
    ),
  },
  {
    label: "Vertical scale",
    art: (
      <>
        <path d="M3.500 8.500h8l-4-4zM3.500 11.500h8l-4 4zM17.500 5.500h7l-3.500 4.500zM17.500 15.500h7l-3.500-4.500z" fill="#fff" />
        <path d="M14.500 2v16" />
      </>
    ),
  },
  {
    label: "Grid",
    p: true,
    art: (
      <>
        <path d="M6.500 2.500h15v14h-15z" fill="#fff" />
        <path d="M8 5.500h13M8 8.500h13M8 11.500h13M8 14.500h13" strokeDasharray="1 2" />
      </>
    ),
  },
  {
    label: "Lines",
    p: true,
    art: (
      <>
        <path d="M2 2l23 7" stroke="#00f" />
        <path d="M2 9l23-8" stroke="#f00" />
        <T x={14} y={18}>LINES</T>
      </>
    ),
  },
  {
    label: "Gann",
    p: true,
    art: (
      <>
        <path d="M2 9l8-8" stroke="#008000" />
        <path d="M2 9l16-7" stroke="#00f" />
        <path d="M2 9l23-4" stroke="#f00" />
        <path d="M2 9.500h23" />
        <T x={14} y={18}>GANN</T>
      </>
    ),
  },
  {
    label: "Fibonacci",
    p: true,
    art: (
      <>
        <path d="M2 2.500h23M2 5.500h23M2 9.500h23" />
        <T x={14} y={18}>FIB</T>
      </>
    ),
  },
  { label: "Crosshair", p: true, art: <path d="M7 10h6M15 10h6M14 3v6M14 11v6" stroke="#f00" strokeWidth="2" /> },
];

const rightIcons: { label: string; p?: boolean; art: React.ReactNode }[] = [
  { label: "Clear", p: true, art: <path d="M4 4l5 5M16 4l-5 5M4 16l5-5M16 16l-5-5" strokeWidth="2" shapeRendering="auto" /> },
  {
    label: "Pencil",
    art: (
      <g shapeRendering="auto">
        <path d="M4 4l10 10" strokeWidth="6" />
        <path d="M6 6l7 7" stroke="#ff0" strokeWidth="3.500" />
        <path d="M14 14l2 2" stroke="#800000" strokeWidth="5" />
      </g>
    ),
  },
  {
    label: "Parallel lines",
    art: (
      <>
        <path d="M3 9l14-7" stroke="#00f" />
        <path d="M3 12l14-7" />
        <path d="M3 16l14-7" stroke="#f00" />
      </>
    ),
  },
  { label: "Fib retracement", art: <><T x={9} y={9} s={9}>FIB</T><T x={10} y={18} s={9}>RET</T></> },
  { label: "Fib extension", art: <><T x={9} y={9} s={9}>FIB</T><T x={10} y={18} s={9}>EXT</T></> },
  { label: "Fib time", art: <><T x={9} y={9} s={9}>FIB</T><T x={10} y={18} s={8}>TIME</T></> },
  {
    label: "Fib arcs",
    art: (
      <>
        <path d="M4 15c-5-7 0-13 6-13s11 6 6 13" stroke="#f00" />
        <path d="M5 12c0-9 10-9 10 0" stroke="#00f" />
        <T x={10} y={17} s={9}>FIB</T>
      </>
    ),
  },
  {
    label: "Gann fan",
    art: (
      <>
        <path d="M2 9l8-7M2 9l8 7" stroke="#008000" />
        <path d="M2 9l15-8M2 9l15 8" stroke="#00f" />
        <path d="M2 9l15-5M2 9l15 5" stroke="#f00" />
        <path d="M2 9.500h16" />
      </>
    ),
  },
  { label: "Gann box", art: <><path d="M4.500 3.500h12v13h-12z" fill="#fff" /><path d="M7.500 4v12M10.500 4v12M13.500 4v12M5 6.500h11M5 9.500h11M5 12.500h11" stroke="#888" /></> },
  { label: "Ellipse", art: <><ellipse cx="10" cy="6" rx="7" ry="4.500" fill="#0ff" stroke="#f00" /><T x={10} y={18} s={7}>ELIPS</T></> },
  {
    label: "Pitchfork",
    art: (
      <>
        <path d="M9 2l8 8M6 5l11 12" stroke="#000080" />
        <path d="M3 9l6 5" stroke="#800000" />
        <path d="M10 6l6 6" stroke="#008000" />
        <path d="M13 3l-9 12" stroke="#000080" strokeDasharray="1 1" />
      </>
    ),
  },
  { label: "PTI", art: <T x={10} y={14} s={11} w={700}>PTI</T> },
  {
    label: "Blue grid",
    art: (
      <>
        <path d="M4.500 3.500h13v12h-13zM9 4v12M13 4v12M5 7.500h12M5 11.500h12" stroke="#00f" />
        <path d="M2.500 4v14h14" stroke="#888" />
      </>
    ),
  },
  {
    label: "MOB",
    art: (
      <>
        <path d="M2 2h16v4h-16z" fill="#f0f" stroke="none" />
        <path d="M2 6h16v3h-16z" fill="#0ff" stroke="none" />
        <T x={10} y={18} s={8}>MOB</T>
      </>
    ),
  },
  {
    label: "Text",
    art: (
      <text x="10" y="16" fontSize="18" textAnchor="middle" fill="#000" stroke="none" fontFamily="Liberation Serif, serif" fontWeight="700">A</text>
    ),
  },
];
const rightLower: { label: string; art: React.ReactNode }[] = [
  { label: "Zoom", art: <g shapeRendering="auto"><circle cx="8" cy="8" r="5" fill="#fff" /><path d="M5.500 8h5M8 5.500v5" /><path d="M12 12l6 6" strokeWidth="2.500" /></g> },
  {
    label: "Eraser",
    art: (
      <g shapeRendering="auto">
        <path d="M5 4l10 11" strokeWidth="8" />
        <path d="M6 5l3 3" stroke="#800000" strokeWidth="6" />
        <path d="M9 8l3 3.500" stroke="#fff" strokeWidth="6" />
        <path d="M12 11.500l4 4" stroke="#ff0" strokeWidth="6" />
      </g>
    ),
  },
  { label: "Fit", art: <><path d="M2.500 2.500h14v15h-14zM2 10h15M9.500 2v16" strokeDasharray="3 1" /><path d="M4 4l4 4M15 4l-4 4M4 16l4-4M15 16l-4-4" /></> },
  { label: "Copy pages", art: <><path d="M2.500 2.500h7l2 2v10h-9z" fill="#fff" /><path d="M8.500 4.500h7l3 3v10h-10z" fill="#fff" /><path d="M10 8l3 0M10 11l6-1M10 14l6-1M4 6l3-1M4 9h3M4 12h3" /></> },
];

function LeftBar() {
  return (
    <div className="flex w-[37px] shrink-0 flex-col">
      <div className="mt-[3px] flex flex-col border-t border-b border-[#a0a0a0] pt-2 pb-[6px] pl-[3px]">
        {leftIcons.map((i) => (
          <Btn key={i.label} label={i.label} pressed={i.p} className="h-[22px] w-[31px]">
            <Ico w={27} h={20}>{i.art}</Ico>
          </Btn>
        ))}
        <Btn label="Properties" className="mt-[5px] h-[22px] w-[31px]">
          <Ico w={27} h={20}>
            <path d="M7.500 6.500h11v11h-11z" fill="#fff" />
            <path d="M9 11.500h2M12 11.500h5M9 14.500h2M12 14.500h5" />
            <path d="M10 7.500l4-4h7v3h-5l-3 3z" fill="#fff" />
            <path d="M22 2v6" stroke="#000080" strokeWidth="2" />
          </Ico>
        </Btn>
      </div>
    </div>
  );
}

function RightBar() {
  return (
    <div className="flex w-[30px] shrink-0 flex-col">
      <div className="flex flex-col border-t border-b border-[#a0a0a0] pt-2 pb-[5px] pl-1">
        {rightIcons.map((i) => (
          <Btn key={i.label} label={i.label} pressed={i.p} className="h-[22px] w-[23px]">
            <Ico>{i.art}</Ico>
          </Btn>
        ))}
        <div className="mt-[5px]">
          {rightLower.map((i) => (
            <Btn key={i.label} label={i.label} className="h-[22px] w-[23px]">
              <Ico>{i.art}</Ico>
            </Btn>
          ))}
        </div>
        <Btn label="Magnet" pressed className="mt-[5px] h-[22px] w-[23px]">
          <Ico>
            <path d="M6 6v5c0 6 8 6 8 0v-5" stroke="#f00" strokeWidth="3" shapeRendering="auto" />
            <path d="M4 3h4v3h-4zM12 3h4v3h-4z" fill="#000" stroke="none" />
          </Ico>
        </Btn>
      </div>
    </div>
  );
}

const readouts: [string, string, string][] = [
  ["OP", "33594.000", "text-[#a6caf0]"],
  ["HI", "33924.000", "text-[#a6caf0]"],
  ["LO", "33594.000", "text-[#a6caf0]"],
  ["CL", "33859.000", "text-[#a6caf0]"],
  ["MA", "33639.000", "text-[#ffff00]"],
  ["MA", "33034.476", "text-[#0000ff]"],
];
const oscReadouts: [string, string, string][] = [
  ["OSC", "315", "text-[#ff00ff]"],
  ["UP", "292", "text-[#008080]"],
  ["DN", "-250", "text-[#008080]"],
];
const tape = ["38585", "38585", "38590", "38587", "38585", "38580", "38582", "38582", "38575", "38585", "38590", "38582", "38580", "38570", "38582"];
const dates = ["10/28/24", "11/04/24", "11/11/24", "11/18/24", "11/25/24", "12/02/24", "12/09/24", "12/16/24", "12/23/24", "01/06/25", "01/13/25", "01/20/25", "01/27/25", "02/03/25", "02/10/25", "02/17/25", "02/24/25", "03/03/25", "03/10/25", "03/17/25"];
const tabs = ["Osc 5,35", "Osc 11,42", "Osc 16,64", "ADX/DMI 64"];
const tabWidths = [54, 60, 60, 68];
const menus = ["File", "Page", "Chart", "Tools", "View", "Window", "Help"];

function TitleBar() {
  return (
    <header className="relative flex h-[29px] shrink-0 items-center overflow-hidden border-b border-[#3c4a58] bg-[linear-gradient(to_right,#8fa6bf_0,#a9bacb_2%,#b3c2d0_12%,#aebfce_22%,#a7bccf_36%,#b4cfe6_41%,#c5e0fb_46%,#c3defa_54%,#b4cfe8_62%,#a4c2dd_71%,#b8d6f2_74%,#c4dff9_77.300%,#19314c_78.300%,#1b3550_86%,#2a4866_100%)]">
      <div className="absolute top-[11px] left-[430px] h-2 w-[190px] bg-[repeating-linear-gradient(to_right,#5c6d7c_0_14px,#8799a8_14px_19px)] opacity-50 blur-[3px]" />
      <div className="absolute top-[11px] left-[620px] h-2 w-[165px] bg-[repeating-linear-gradient(to_right,#54687a_0_18px,#8ba1b5_18px_22px)] opacity-50 blur-[3px]" />
      <div className="absolute inset-x-0 bottom-0 h-[7px] bg-gradient-to-b from-transparent to-[#5c7388]/60" />
      <svg width="19" height="20" viewBox="0 0 19 20" className="relative" aria-hidden="true">
        <path d="M0 5l4 3 4-3 3 2h8v8l-6 2-3-1-5 3H0z" fill="#0a0aa0" />
        <path d="M0 15l6-3 4 2 4-7 5-3" stroke="#f04040" strokeWidth="1.500" fill="none" />
      </svg>
      <h1 className="relative ml-[6px] font-['Open_Sans','Noto_Sans',sans-serif] text-[14px] whitespace-nowrap text-black">
        Advanced GET for TS2000i - [FTSEMIB - SPMIB FUTURES, 180]
      </h1>
      <div className="relative mr-[3px] ml-auto flex h-[25px] self-start overflow-hidden rounded-b-md border border-t-0 border-[#6c8298]">
        <button type="button" aria-label="Minimize" className="flex w-[38px] items-center justify-center border-r border-[#5a7086] bg-[#2a435c]">
          <svg width="18" height="24" aria-hidden="true"><rect x=".5" y="13.500" width="17" height="5" rx="1" fill="#f4f4f4" stroke="#4a5a6a" /></svg>
        </button>
        <button type="button" aria-label="Restore" className="flex w-9 items-center justify-center border-r border-[#5a7086] bg-[#2a435c]">
          <svg width="20" height="20" fill="none" aria-hidden="true">
            <path d="M4.500 2.500h13v12h-13z" fill="#d8dde2" stroke="#4a5a6a" />
            <path d="M1.500 5.500h13v12h-13z" fill="#f4f4f4" stroke="#4a5a6a" />
            <path d="M5.500 9.500h5v4h-5z" fill="#6a7c8e" stroke="#3a4a5a" />
          </svg>
        </button>
        <button type="button" aria-label="Close" className="flex w-[62px] items-center justify-center bg-[#2a435c]">
          <svg width="20" height="18" fill="none" aria-hidden="true">
            <path d="M4 2l12 14M16 2L4 16" stroke="#4a5a6a" strokeWidth="6" />
            <path d="M4 2l12 14M16 2L4 16" stroke="#f0f0f0" strokeWidth="4" />
          </svg>
        </button>
      </div>
    </header>
  );
}

export default function App() {
  return (
    <div className="flex h-screen flex-col overflow-hidden bg-[#f0f0f0] font-['Liberation_Sans',Arial,sans-serif] text-black">
      <TitleBar />

      <nav className="flex h-[29px] shrink-0 items-center border-b border-[#a0a0a0] bg-[linear-gradient(to_bottom,#ffffff_0,#eff1f8_30%,#d3daed_34%,#e2e7f4_100%)]">
        <span className="ml-[7px]">{topIcons.bar}</span>
        <div className="ml-[7px] flex gap-[15px] font-['Open_Sans','Noto_Sans',sans-serif] text-[14px] text-[#6d6d6d]">
          {menus.map((m) => (
            <button key={m} type="button">{m}</button>
          ))}
        </div>
        <div className="ml-auto flex gap-0.5 self-stretch pt-px pr-px pb-px">
          <button type="button" aria-label="Minimize chart" className="flex w-[22px] items-center justify-center border border-[#a9c3dc] bg-[#dbe9f7]">
            <svg width="10" height="10" aria-hidden="true"><path d="M2 7h6v2h-6z" fill="#8c9aa8" /></svg>
          </button>
          <button type="button" aria-label="Restore chart" className="flex w-[22px] items-center justify-center border border-[#a9c3dc] bg-[#dbe9f7]">
            <svg width="10" height="10" fill="none" stroke="#8c9aa8" aria-hidden="true"><path d="M3.500 3v-1.500h5v4h-1.500M1.500 4.500h5v4h-5zM1.500 5.500h5" /></svg>
          </button>
          <button type="button" aria-label="Close chart" className="flex w-[22px] items-center justify-center border border-[#a9c3dc] bg-[#dbe9f7]">
            <svg width="8" height="8" stroke="#8c9aa8" strokeWidth="2" aria-hidden="true"><path d="M1 1l6 6M7 1l-6 6" /></svg>
          </button>
        </div>
      </nav>

      <div className="flex h-[31px] shrink-0 items-center border-t border-b border-t-white border-b-[#a0a0a0] pt-0.5 pl-[6px]">
        <div className="flex gap-2">
          {iconGroups.map((g) => (
            <div key={g[0][0]} className="flex">
              {g.map(([k, label]) => (
                <Btn key={k} label={label} className="h-6 w-[23px]">{topIcons[k]}</Btn>
              ))}
            </div>
          ))}
        </div>
        <Sep />
        <div className="flex">{studiesOne.map((s) => <StudyButton key={s.a + s.b} {...s} />)}</div>
        <Sep />
        <div className="flex">{studiesTwo.map((s) => <StudyButton key={s.a + s.b} {...s} />)}</div>
        <Sep />
        <div className="flex">
          {["1", "5", "10", "15", "30", "60", "D", "W", "M"].map((t) => (
            <Btn key={t} label={t} className="h-6 w-[23px]">
              <span className="text-[14px] leading-4 font-bold">{t}</span>
            </Btn>
          ))}
        </div>
        <Sep />
      </div>

      <div className="flex min-h-0 flex-1">
        <LeftBar />
        <main className="flex min-w-0 flex-1 flex-col border-l border-[#808080] text-[16px] font-bold">
          <div className="flex h-[21px] shrink-0 items-center border-t-2 border-[#606060] bg-[#0000ff] pr-[7px] pl-[7px] leading-[19px] text-white">
            <span className="w-[36%]">03/18/25</span>
            <span>O:</span>
            <span className="ml-[7px]">38495.000</span>
            <span className="ml-10">38595.000</span>
            <span className="ml-[18px] text-[#ff0000]">L:</span>
            <span className="ml-2">38450.000</span>
            <span className="ml-[18px]">C:</span>
            <span className="ml-[7px]">38582.000</span>
            <span className="ml-auto text-[#ff0000]">-1.000</span>
          </div>
          <div className="h-1 shrink-0 bg-[#f4f4f4]" />

          <section className="flex min-h-0 flex-1 border-t-2 border-l border-[#606060] bg-black">
            <div className="relative min-w-0 flex-1 overflow-hidden">
              <PricePane />
              <dl className="absolute top-0 left-px grid grid-cols-[31px_auto] leading-[19px]">
                {readouts.map(([k, v, c], i) => (
                  <React.Fragment key={i}>
                    <dt className={c}>{k}</dt>
                    <dd className={c}>{v}</dd>
                  </React.Fragment>
                ))}
              </dl>
              <div className="absolute bottom-0 left-[313px] flex leading-[20px] text-[#808080]">
                {tape.map((p, i) => (
                  <span key={i} className={i === tape.length - 1 ? "w-24 text-white" : "w-24"}>{p}.000</span>
                ))}
              </div>
            </div>
            <div className="relative flex">
              <Axis top={116} ticks={priceTicks} labels={priceLabels} tag="36279.585" tagY={374} />
              <button type="button" aria-label="Rescale" className="absolute right-0.5 bottom-0.5 flex h-[15px] w-[23px] items-center justify-center border border-white bg-[#c0c0c0]">
                <svg width="21" height="14" viewBox="0 0 27 20" fill="none" stroke="#000" strokeWidth="1.500" aria-hidden="true"><ScalesArt /></svg>
              </button>
            </div>
          </section>

          <div className="h-1 shrink-0 bg-[#f8f8f8]" />

          <section className="flex shrink-0 border-t-2 border-l border-[#606060] bg-black">
            <div className="flex min-w-0 flex-1 flex-col">
              <div className="relative h-[305px] overflow-hidden">
                <OscPane />
                <div className="absolute top-0 left-px leading-[19px]">
                  <div className="text-white">Osc 11,42</div>
                  <dl className="grid grid-cols-[39px_auto]">
                    {oscReadouts.map(([k, v, c]) => (
                      <React.Fragment key={k}>
                        <dt className={c}>{k}</dt>
                        <dd className={c}>{v}</dd>
                      </React.Fragment>
                    ))}
                  </dl>
                </div>
              </div>
              <div className="mr-px flex h-[21px] bg-[#f0f0f0] text-[11px] font-normal">
                <Btn label="Scroll tabs left" className="h-full w-[21px]">
                  <svg width="6" height="10" aria-hidden="true"><path d="M5 0v10l-5-5z" /></svg>
                </Btn>
                <Btn label="Scroll tabs right" className="h-full w-[21px]">
                  <svg width="6" height="10" aria-hidden="true"><path d="M0 0v10l5-5z" /></svg>
                </Btn>
                <div className="ml-1 flex" role="tablist">
                  {tabs.map((t, i) => {
                    const w = tabWidths[i];
                    return (
                      <button key={t} type="button" role="tab" aria-selected={i === 1} className="relative h-5" style={{ width: w }}>
                        <svg className="absolute inset-0 overflow-visible" width={w} height="20" aria-hidden="true">
                          <path d={`M-2 0l6 19.500H${w - 2}l6-19.500`} fill={i === 1 ? "#fff" : "none"} stroke="#000" />
                        </svg>
                        <span className="relative -top-0.5 whitespace-nowrap">{t}</span>
                      </button>
                    );
                  })}
                </div>
              </div>
            </div>
            <Axis top={702} ticks={oscTicks} labels={oscLabels} tag="1062" tagY={703} />
          </section>

          <div className="h-[5px] shrink-0 bg-[#f8f8f8]" />

          <footer className="mb-[3px] flex h-[22px] shrink-0 border-t-2 border-b border-l border-t-[#606060] border-b-[#d0d0d0] border-l-[#606060] leading-[19px] text-white">
            <div className="relative flex min-w-0 flex-1 overflow-hidden border-r-2 border-white bg-black pl-[31px]">
              {dates.map((d) => (
                <time key={d} className="w-[75px] shrink-0 border-l border-white pl-0.5 odd:shrink-0 nth-[9]:mr-0">
                  {d}
                </time>
              ))}
              <output className="absolute top-px left-[387px] h-[17px] bg-[#0000ff] pr-[5px] pl-1 leading-[17px] whitespace-nowrap">12/05/24 - 12:00</output>
            </div>
            <div className="w-[98px] shrink-0 bg-[#0000ff]" />
          </footer>
        </main>
        <RightBar />
      </div>

      <div className="flex h-[22px] shrink-0 items-stretch border-t border-b-2 border-t-white border-b-[#5a6b7c] font-['Open_Sans','Noto_Sans',sans-serif] text-[14px] leading-[20px]">
        <span className="flex-1 pl-0.5">For Help, press F1</span>
        <span className="mt-px w-[486px] border-t border-l border-[#808080] pl-0.5 leading-[18px]">Page: 1 - FTSEMIB B</span>
      </div>
    </div>
  );
}
